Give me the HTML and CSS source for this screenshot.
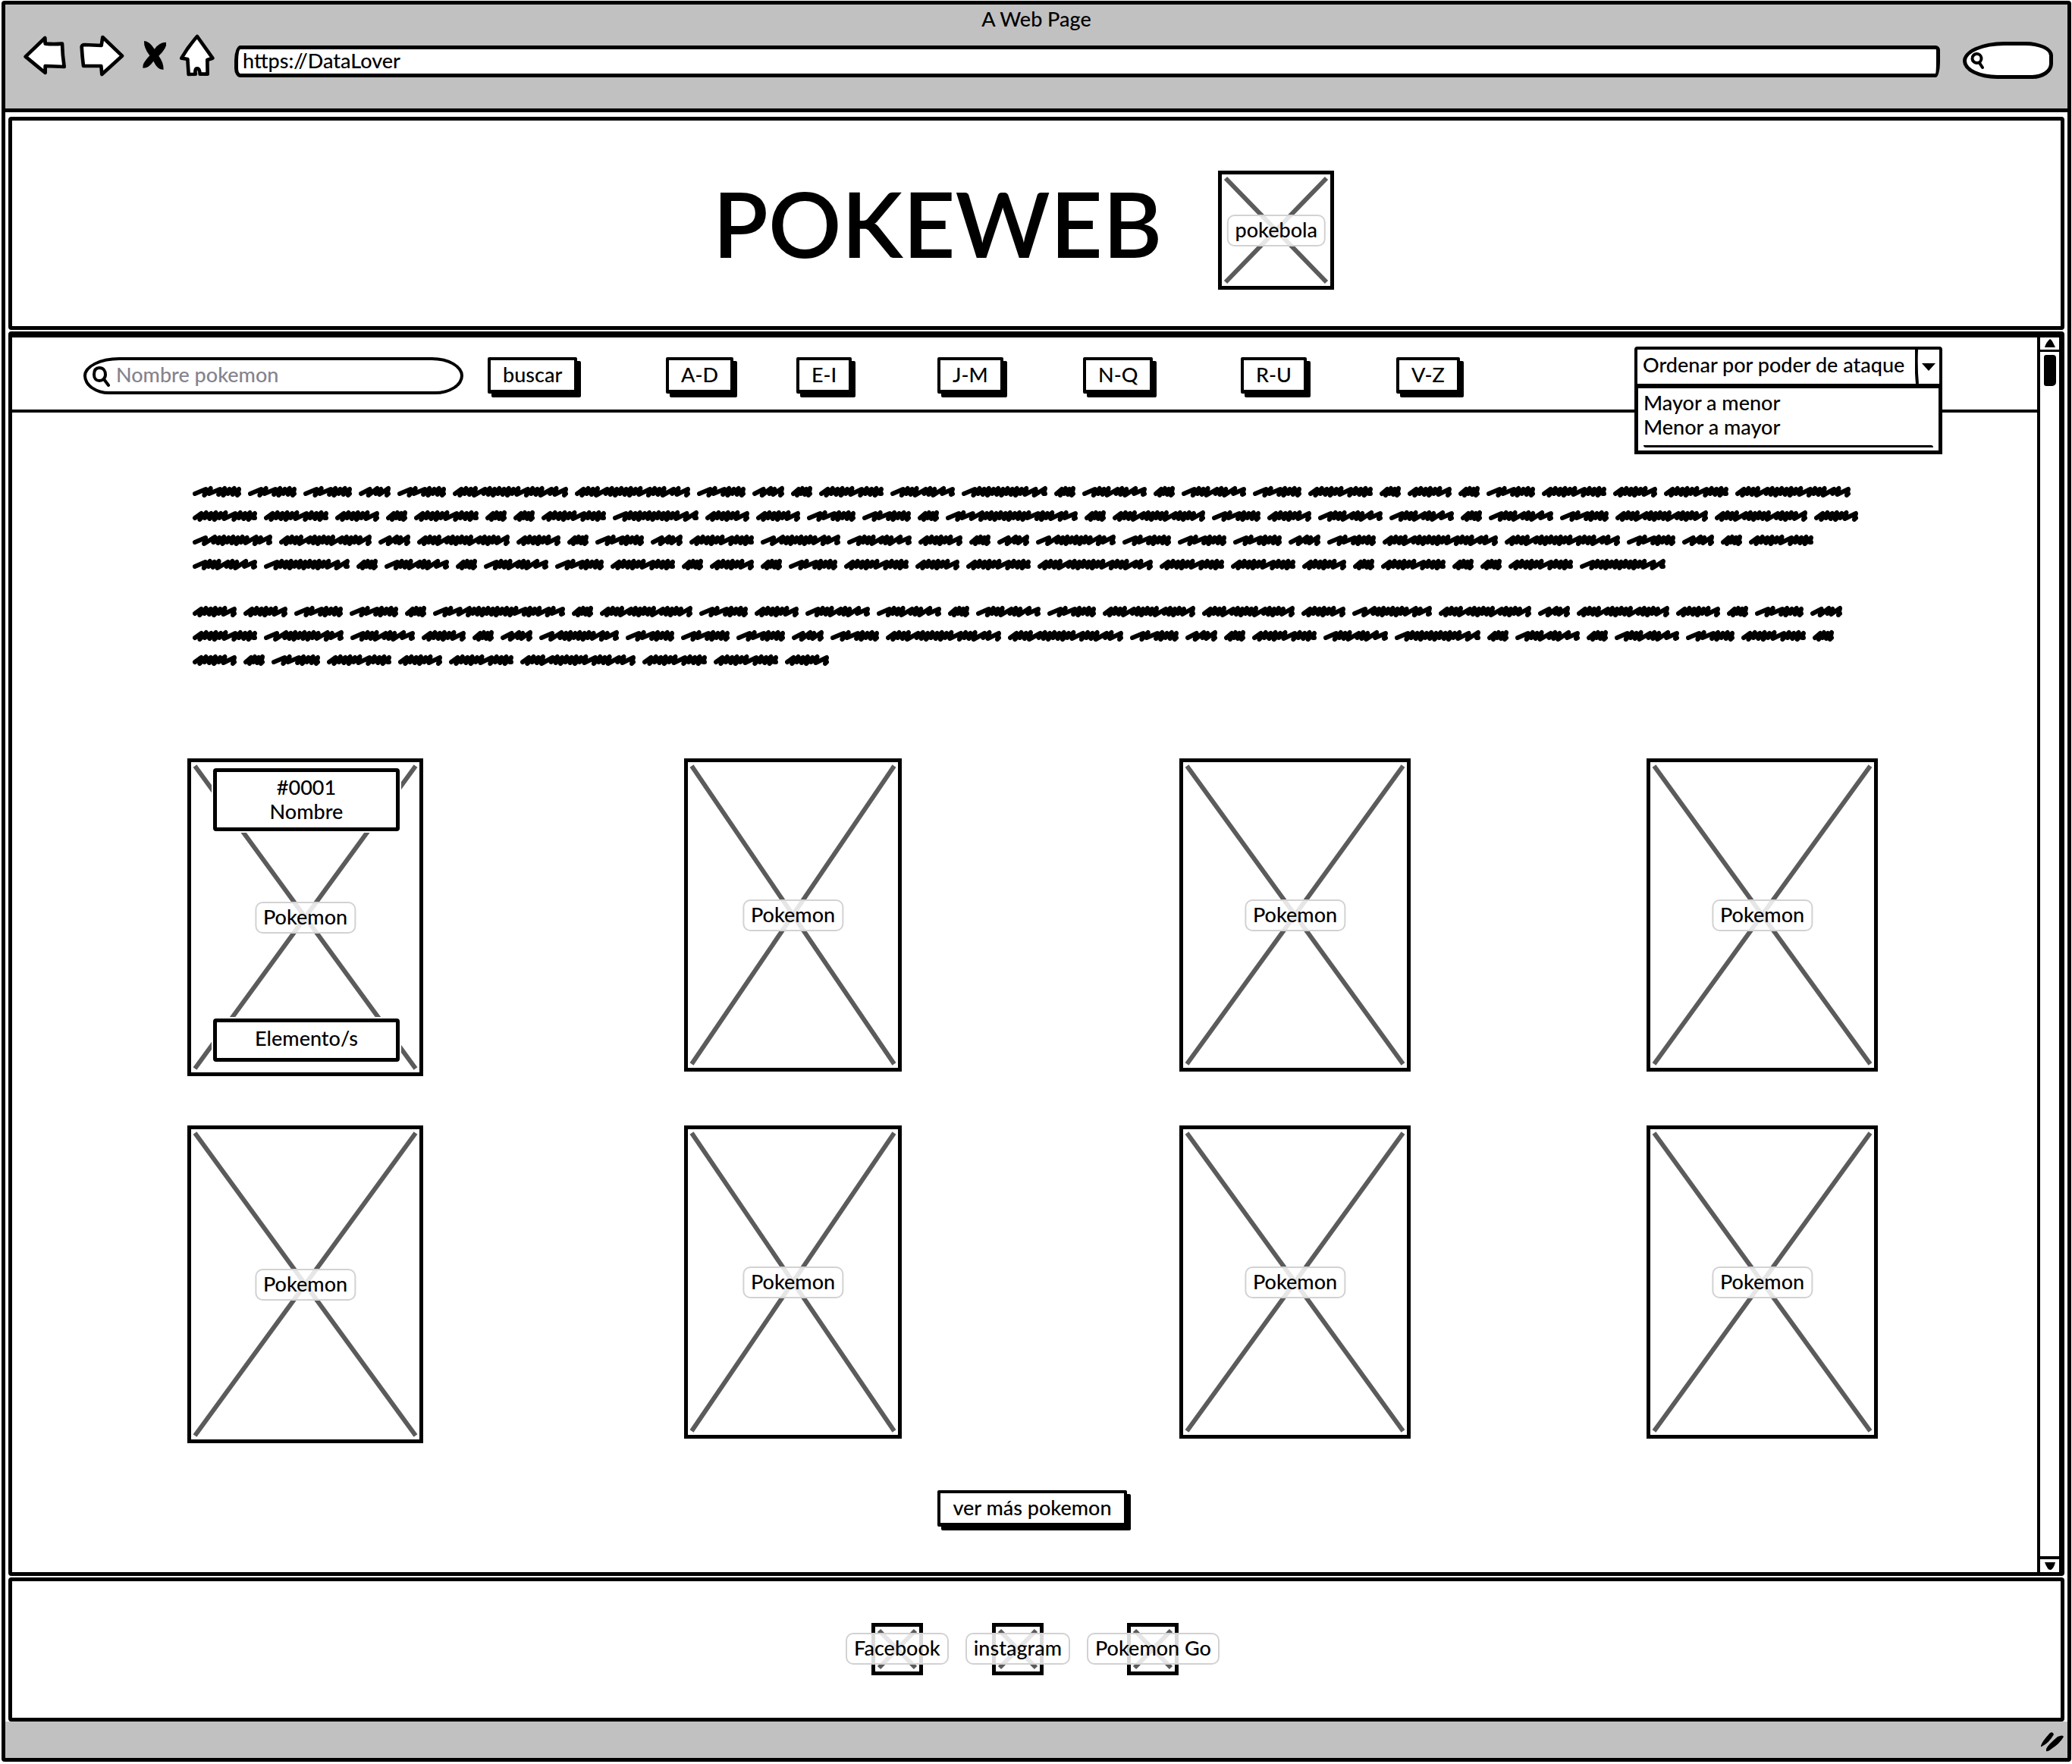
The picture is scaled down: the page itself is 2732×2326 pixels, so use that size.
FILE: index.html
```html
<!DOCTYPE html>
<html lang="es">
<head>
<meta charset="utf-8">
<meta name="viewport" content="width=device-width, initial-scale=1">
<title>A Web Page</title>
<link rel="stylesheet" href="styles.css">
</head>
<body>
<div class="browser">
  <header class="toolbar">
    <p class="window-title">A Web Page</p>
    <div class="toolbar-row">
      <button class="tool tool-back" type="button" aria-label="Atrás">
        <svg width="57" height="54" viewBox="33 48 171 162"><path class="outline" d="M41 134 118 60 119 83Q152 86 186 83 187 128 194 174L119 171 119 198Q82 168 41 134Z"/></svg>
      </button>
      <button class="tool tool-forward" type="button" aria-label="Adelante">
        <svg width="60" height="56" viewBox="252 48 180 168"><path class="outline" d="M263 98Q264 90 275 90L341 93 346 60 423 134 343 207 340 174 270 174Q265 135 263 98Z"/></svg>
      </button>
      <button class="tool tool-stop" type="button" aria-label="Detener">
        <svg width="34" height="41" viewBox="501 60 102 123"><path d="M510 66Q531 67 551 98 570 71 597 71 602 92 568 125 587 151 587 179 565 183 547 146 527 175 505 173 501 156 532 124 508 93 510 66Z"/></svg>
      </button>
      <button class="tool tool-home" type="button" aria-label="Inicio">
        <svg width="48" height="57" viewBox="648 42 144 171"><path class="outline" d="M720 54 781 140 760 147 761 203 731 203Q730 181 720 181 710 181 713 203L686 204 682 144 658 140Q686 92 720 54Z"/></svg>
      </button>
      <input class="address" type="text" value="https://DataLover" aria-label="Dirección">
      <label class="quick-search">
        <svg width="20" height="24" viewBox="0 0 20 24"><path class="lens" d="M9 3a6 6 0 1 0 1 12a6 6 0 0 0-1-12M13 15l4 6"/></svg>
        <input type="text" aria-label="Búsqueda rápida">
      </label>
    </div>
  </header>

  <div class="page">
    <header class="masthead">
      <h1 class="site-name">POKEWEB</h1>
      <div class="picture picture-logo">
        <svg class="cross" aria-hidden="true"><line x1="0" y1="0" x2="100%" y2="100%"/><line x1="100%" y1="0" x2="0" y2="100%"/></svg>
        <span class="caption">pokebola</span>
      </div>
    </header>

    <div class="viewport">
      <main class="content">
        <nav class="filters">
          <label class="search">
            <svg width="24" height="28" viewBox="0 0 24 28"><path class="lens" d="M10 3c-5 0-7 4-7 9s3 8 7 8 8-3 8-8-3-9-8-9M16 18l6 8"/></svg>
            <input type="text" placeholder="Nombre pokemon" aria-label="Nombre pokemon">
          </label>
          <button class="btn" type="button">buscar</button>
          <button class="btn" type="button">A-D</button>
          <button class="btn" type="button">E-I</button>
          <button class="btn" type="button">J-M</button>
          <button class="btn" type="button">N-Q</button>
          <button class="btn" type="button">R-U</button>
          <button class="btn" type="button">V-Z</button>
          <div class="sort">
            <select aria-label="Ordenar por poder de ataque">
              <option>Ordenar por poder de ataque</option>
            </select>
            <svg class="sort-arrow" width="32" height="45" viewBox="0 0 32 45" aria-hidden="true"><path class="divider" d="M2 0Q1 24 3 45"/><path d="M9 18H27L18 28Z"/></svg>
            <ul class="sort-menu">
              <li>Mayor a menor</li>
              <li>Menor a mayor</li>
            </ul>
          </div>
        </nav>

        <section class="intro" id="intro" aria-hidden="true"></section>

        <section class="cards">
          <article class="picture card">
            <svg class="cross" aria-hidden="true"><line x1="0" y1="0" x2="100%" y2="100%"/><line x1="100%" y1="0" x2="0" y2="100%"/></svg>
            <p class="plate plate-name">#0001<br>Nombre</p>
            <span class="caption">Pokemon</span>
            <p class="plate">Elemento/s</p>
          </article>
          <article class="picture card"><svg class="cross" aria-hidden="true"><line x1="0" y1="0" x2="100%" y2="100%"/><line x1="100%" y1="0" x2="0" y2="100%"/></svg><span class="caption">Pokemon</span></article>
          <article class="picture card"><svg class="cross" aria-hidden="true"><line x1="0" y1="0" x2="100%" y2="100%"/><line x1="100%" y1="0" x2="0" y2="100%"/></svg><span class="caption">Pokemon</span></article>
          <article class="picture card"><svg class="cross" aria-hidden="true"><line x1="0" y1="0" x2="100%" y2="100%"/><line x1="100%" y1="0" x2="0" y2="100%"/></svg><span class="caption">Pokemon</span></article>
          <article class="picture card"><svg class="cross" aria-hidden="true"><line x1="0" y1="0" x2="100%" y2="100%"/><line x1="100%" y1="0" x2="0" y2="100%"/></svg><span class="caption">Pokemon</span></article>
          <article class="picture card"><svg class="cross" aria-hidden="true"><line x1="0" y1="0" x2="100%" y2="100%"/><line x1="100%" y1="0" x2="0" y2="100%"/></svg><span class="caption">Pokemon</span></article>
          <article class="picture card"><svg class="cross" aria-hidden="true"><line x1="0" y1="0" x2="100%" y2="100%"/><line x1="100%" y1="0" x2="0" y2="100%"/></svg><span class="caption">Pokemon</span></article>
          <article class="picture card"><svg class="cross" aria-hidden="true"><line x1="0" y1="0" x2="100%" y2="100%"/><line x1="100%" y1="0" x2="0" y2="100%"/></svg><span class="caption">Pokemon</span></article>
        </section>

        <div class="more"><button class="btn" type="button">ver más pokemon</button></div>
      </main>

      <div class="scrollbar" aria-hidden="true">
        <svg class="scroll-up" width="25" height="16" viewBox="0 0 25 16"><path d="M13 2Q15 2 20 13H6Q8 6 13 2Z"/></svg>
        <div class="scroll-thumb"></div>
        <svg class="scroll-down" width="25" height="17" viewBox="0 0 25 17"><path d="M6 4H20Q18 12 14 14 10 15 6 4Z"/></svg>
      </div>
    </div>

    <footer class="links">
      <a class="link" href="#facebook"><span class="picture picture-icon"><svg class="cross" aria-hidden="true"><line x1="0" y1="0" x2="100%" y2="100%"/><line x1="100%" y1="0" x2="0" y2="100%"/></svg></span><span class="link-name">Facebook</span></a>
      <a class="link" href="#instagram"><span class="picture picture-icon"><svg class="cross" aria-hidden="true"><line x1="0" y1="0" x2="100%" y2="100%"/><line x1="100%" y1="0" x2="0" y2="100%"/></svg></span><span class="link-name">instagram</span></a>
      <a class="link" href="#pokemon-go"><span class="picture picture-icon"><svg class="cross" aria-hidden="true"><line x1="0" y1="0" x2="100%" y2="100%"/><line x1="100%" y1="0" x2="0" y2="100%"/></svg></span><span class="link-name">Pokemon Go</span></a>
    </footer>
  </div>

  <div class="statusbar" aria-hidden="true">
    <svg width="32" height="26" viewBox="0 0 32 26"><path d="M1 18Q2 13 13 1 17-1 18 3 12 14 2 19 1 20 1 18ZM8 22Q10 17 23 6 30 3 31 6 26 15 15 22 10 26 8 25Z"/></svg>
  </div>
</div>
<script src="scribble.js"></script>
</body>
</html>
```

FILE: styles.css
```css
*,
*::before,
*::after {
  box-sizing: border-box;
}

body {
  margin: 0;
  background: #fff;
  color: #000;
  font: 500 27px/32px Lato, "Open Sans", sans-serif;
}

p, ul, h1 {
  margin: 0;
  padding: 0;
}

button, input, select {
  font: inherit;
  color: inherit;
}

svg {
  display: block;
  flex: none;
}

.browser {
  margin: 1px 1px 1px 2px;
  border: 5px solid #000;
  border-radius: 4px;
}

/* Window chrome */

.toolbar {
  height: 142px;
  border-bottom: 5px solid #000;
  background: #c1c1c1;
}

.window-title {
  padding-top: 3px;
  text-align: center;
}

.toolbar-row {
  display: flex;
  align-items: center;
  padding: 0 19px 0 24px;
}

.tool {
  padding: 0;
  border: 0;
  background: none;
}

.tool-back { margin-right: 16px; }
.tool-forward { margin-right: 23px; }
.tool-stop { margin-right: 15px; }
.tool-home { margin-right: 25px; }

.outline {
  fill: #fff;
  stroke: #000;
  stroke-width: 14;
  stroke-linejoin: round;
}

.lens {
  fill: none;
  stroke: #000;
  stroke-width: 4;
  stroke-linecap: round;
}

.address {
  flex: 1;
  min-width: 0;
  height: 42px;
  margin-top: 16px;
  padding: 0 6px 2px;
  border: 5px solid #000;
  border-radius: 8px 6px 6px 8px / 20px 6px 20px 12px;
  background: #fff;
}

.quick-search {
  display: flex;
  align-items: center;
  width: 119px;
  height: 49px;
  margin: 14px 0 0 30px;
  padding-left: 4px;
  border: 5px solid #000;
  border-radius: 60px 40px 30px 50px / 28px 20px 22px 26px;
  background: #fff;
}

.quick-search input,
.search input {
  flex: 1;
  min-width: 0;
  border: 0;
  background: none;
  outline: 0;
}

.page {
  padding: 6px 4px 0;
}

/* Crossed picture placeholders */

.picture {
  position: relative;
  border: 5px solid #000;
}

.cross {
  position: absolute;
  inset: 5px;
  width: calc(100% - 10px);
  height: calc(100% - 10px);
  overflow: visible;
  stroke: #5b5b5b;
  stroke-width: 6;
}

.caption,
.link-name {
  padding: 2px 9px 4px;
  border: 2px solid #d2d2d2;
  border-radius: 10px;
  background: rgba(255, 255, 255, 0.85);
  white-space: nowrap;
}

.caption {
  position: absolute;
  top: 50%;
  left: 50%;
  transform: translate(-50%, -50%);
}

/* Masthead */

.masthead {
  display: flex;
  align-items: center;
  justify-content: center;
  gap: 74px;
  height: 281px;
  margin-bottom: 2px;
  padding: 18px 34px 0 0;
  border: 5px solid #000;
  border-radius: 4px;
}

.site-name {
  padding-bottom: 20px;
  font-size: 120px;
  font-weight: 600;
  line-height: 140px;
}

.picture-logo {
  width: 153px;
  height: 157px;
}

/* Scrolling area */

.viewport {
  display: flex;
  border: 5px solid #000;
  border-top-width: 8px;
  border-right-width: 7px;
  border-radius: 4px;
}

.content {
  flex: 1;
  min-width: 0;
}

.scrollbar {
  display: flex;
  flex-direction: column;
  align-items: center;
  width: 29px;
  border-left: 4px solid #000;
}

.scroll-thumb {
  width: 16px;
  height: 41px;
  margin: 4px 0 auto;
  border-radius: 3px 4px 5px 3px;
  background: #000;
}

.scroll-up,
.scroll-down {
  box-sizing: content-box;
  border: 0 solid #000;
}

.scroll-up { border-bottom-width: 3px; }
.scroll-down { border-top-width: 4px; }

/* Filters */

.filters {
  display: grid;
  grid-template-columns: 533fr 235fr 172fr 186fr 192fr 208fr 205fr 314fr 531fr;
  align-items: start;
  justify-items: start;
  height: 99px;
  padding: 26px 0 0 94px;
  border-bottom: 4px solid #000;
}

.search {
  display: flex;
  align-items: center;
  gap: 6px;
  width: 94%;
  height: 49px;
  padding-left: 7px;
  border: 4px solid #000;
  border-radius: 50px 44px 40px 36px / 26px;
  background: #fff;
}

.search input {
  padding-bottom: 4px;
}

.search input::placeholder {
  color: #85838f;
  opacity: 1;
}

.btn {
  height: 48px;
  padding: 0 16px 2px;
  border: 4px solid #000;
  border-bottom-width: 5px;
  border-radius: 2px;
  background: #fff;
  box-shadow: 5px 5px 0 #000;
  white-space: nowrap;
}

.sort {
  position: relative;
  width: 406px;
  margin-top: -14px;
}

.sort select {
  width: 100%;
  height: 53px;
  padding: 0 36px 5px 7px;
  border: 4px solid #000;
  border-radius: 4px;
  background: #fff;
  appearance: none;
}

.sort-arrow {
  position: absolute;
  top: 4px;
  right: 4px;
  pointer-events: none;
}

.divider {
  fill: none;
  stroke: #000;
  stroke-width: 4;
}

.sort-menu {
  position: absolute;
  top: 49px;
  left: 0;
  width: 100%;
  height: 93px;
  padding: 3px 7px;
  border: 5px solid #000;
  border-top-width: 6px;
  background: #fff;
  list-style: none;
}

.sort-menu::after {
  content: "";
  display: block;
  height: 3px;
  margin-top: 8px;
  border-radius: 0 4px 0 4px;
  background: #000;
}

/* Scribbled copy */

.intro {
  padding: 89px 0 113px 238px;
}

.scribble-paragraph + .scribble-paragraph {
  margin-top: 30px;
}

.scribble-line {
  display: flex;
  align-items: center;
  gap: 9px;
  height: 32px;
}

.scribble {
  fill: none;
  stroke: #000;
  stroke-width: 6;
  stroke-linecap: round;
  stroke-linejoin: round;
}

/* Cards */

.cards {
  display: grid;
  grid-template-columns: 655fr 653fr 616fr 515fr;
  row-gap: 65px;
  padding-left: 231px;
}

.card {
  display: flex;
  flex-direction: column;
  align-items: center;
  justify-content: space-between;
  width: 305px;
  height: 413px;
  padding: 8px 0 14px 3px;
}

.card:nth-child(4n + 1) {
  width: 311px;
  height: 419px;
}

.card:nth-child(4n + 2) {
  width: 287px;
}

.plate {
  position: relative;
  width: 246px;
  padding: 5px 0 10px;
  border: 5px solid #000;
  border-radius: 4px;
  background: #fff;
  box-shadow: 0 0 0 2px #fff;
  text-align: center;
}

.plate-name {
  padding: 4px 0 5px;
}

.more {
  padding: 62px 0 60px 20px;
  text-align: center;
}

/* Footer */

.links {
  display: flex;
  align-items: center;
  justify-content: center;
  gap: 22px;
  height: 190px;
  margin-top: 2px;
  padding: 0 10px 2px 0;
  border: 5px solid #000;
  border-radius: 4px;
}

.link {
  display: grid;
  place-items: center;
  color: inherit;
  text-decoration: none;
}

.picture-icon,
.link-name {
  grid-area: 1 / 1;
}

.picture-icon {
  width: 68px;
  height: 69px;
}

.link-name {
  position: relative;
}

.statusbar {
  display: flex;
  align-items: center;
  justify-content: flex-end;
  height: 48px;
  padding: 6px 4px 0 0;
  background: #c1c1c1;
}
```

FILE: scribble.js
```js
// Placeholder copy: every letter names one scribbled word.
// "w" is the word's width; "s" lists its strokes, short (.) or long (-).
const words = {
  a: { w: 28, s: "...." },
  b: { w: 42, s: "--.-" },
  c: { w: 58, s: "......-" },
  d: { w: 64, s: "-.-...." },
  e: { w: 85, s: "......-...." },
  f: { w: 85, s: "-...-..--" },
  g: { w: 105, s: "--.......-.-" },
  h: { w: 113, s: "-...........--" },
  i: { w: 122, s: "....-.....-....-" },
  j: { w: 152, s: "....-.......-...-.-" },
  k: { w: 174, s: "-.--..........-...-.-" }
};

const paragraphs = [
  [
    "dddbdjjdbaefhafafdeacadecej",
    "eecaeaaehccddakaidcffafdiic",
    "gibicadbegfcabgdddbdjjdbae",
    "fhafafdeacadecejeecaeaaeh"
  ],
  [
    "ccddakaidcffafdiicgibicadb",
    "egfcabgdddbdjjdbaefhafafdea",
    "cadecejeec"
  ]
];

function scribble({ w, s }) {
  const units = [...s].map((c) => (c === "-" ? 2 : 1));
  const step = (w - 8) / units.reduce((sum, u) => sum + u, 0);
  const troughs = [14, 12, 13];
  let x = 3;
  let d = "M3 12";
  units.forEach((u, i) => {
    const peak = x + u * step + 2;
    x += u * step;
    d += `L${peak.toFixed(1)} ${6 - (i % 2)}L${x.toFixed(1)} ${troughs[i % 3]}`;
  });
  d += `L${w - 3} 12`;
  return `<svg class="scribble" width="${w}" height="20" viewBox="0 0 ${w} 20"><path d="${d}"/></svg>`;
}

document.getElementById("intro").innerHTML = paragraphs
  .map((lines) => `<div class="scribble-paragraph">${lines
    .map((line) => `<div class="scribble-line">${[...line].map((k) => scribble(words[k])).join("")}</div>`)
    .join("")}</div>`)
  .join("");
```
